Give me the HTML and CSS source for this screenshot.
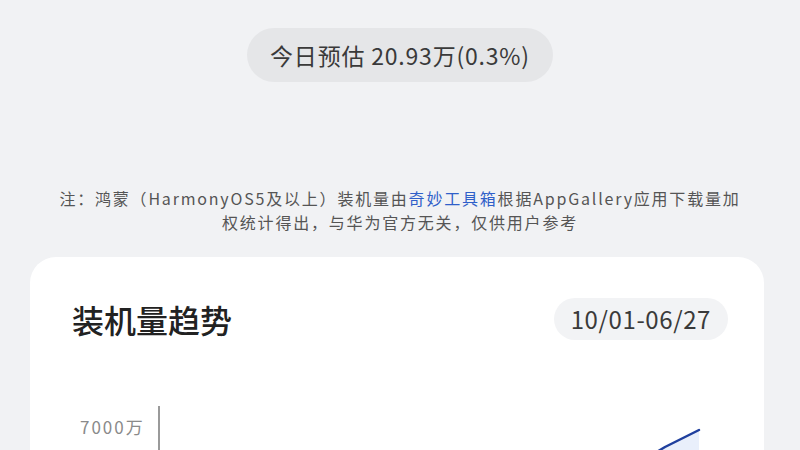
FILE: index.html
```html
<!DOCTYPE html>
<html lang="zh-CN">

<head>
	<meta charset="UTF-8">
	<title>鸿蒙装机量</title>
	<link rel="stylesheet" href="styles.css">
</head>

<body>
	<div id="wrapper">
		<div class="estimate">今日预估 20.93万(0.3%)</div>

		<p class="note">
			注：鸿蒙（HarmonyOS5及以上）装机量由<span class="brand">奇妙工具箱</span>根据AppGallery应用下载量加<br>
			权统计得出，与华为官方无关，仅供用户参考
		</p>

		<div class="card">
			<div class="card-head">
				<h2 class="card-title">装机量趋势</h2>
				<span class="range">10/01-06/27</span>
			</div>

			<div class="chart">
				<div class="y-labels">
					<span>7000万</span>
				</div>
				<div class="plot">
					<svg class="trend" width="560" height="160" viewBox="0 0 560 160">
						<polygon class="area" points="480,56 505,41 539,24 539,160 480,160"></polygon>
						<polyline class="line" points="480,56 505,41 539,24"></polyline>
					</svg>
				</div>
			</div>
		</div>
	</div>
</body>

</html>
```

FILE: styles.css
```css
html,
body {
	margin: 0;
	background-color: #f1f2f4;
	overflow: hidden;
}

body {
	font-family: "Noto Sans CJK SC", "Noto Sans", sans-serif;
	color: #2b2b2b;
}

#wrapper {
	width: 800px;
	display: flex;
	flex-direction: column;
	align-items: center;
	padding-top: 28px;
}

.estimate {
	background-color: #e5e6e8;
	border-radius: 27px;
	height: 54px;
	line-height: 54px;
	padding: 0 23px;
	font-size: 23px;
	letter-spacing: 0.8px;
	color: #3a3a3a;
}

.note {
	margin: 104px 0 0;
	font-size: 16px;
	line-height: 24px;
	letter-spacing: 1.8px;
	text-align: center;
	color: #555;
}

.note .brand {
	color: #2f5fc9;
}

.card {
	align-self: flex-start;
	margin: 23px 0 0 30px;
	width: 734px;
	box-sizing: border-box;
	background-color: #fff;
	border-radius: 26px;
	padding: 41px 36px 0 42px;
}

.card-head {
	display: flex;
	justify-content: space-between;
	align-items: center;
	height: 42px;
}

.card-title {
	margin: 0;
	font-size: 32px;
	font-weight: 500;
	color: #222;
}

.range {
	background-color: #f2f3f5;
	border-radius: 21px;
	height: 42px;
	line-height: 42px;
	padding: 0 17px;
	font-size: 24px;
	letter-spacing: 0.6px;
	color: #3a3a3a;
}

.chart {
	display: flex;
	margin-top: 66px;
	padding-left: 8px;
	height: 200px;
}

.y-labels {
	width: 78px;
	padding-top: 9px;
	font-size: 17px;
	line-height: 24px;
	letter-spacing: 2px;
	color: #8a8a8a;
}

.plot {
	flex: 1;
	border-left: 2px solid #9a9a9a;
}

.trend {
	display: block;
}

.trend .area {
	fill: #e9effb;
}

.trend .line {
	fill: none;
	stroke: #1f3f9e;
	stroke-width: 2.5;
	stroke-linecap: round;
	stroke-linejoin: round;
}
```
